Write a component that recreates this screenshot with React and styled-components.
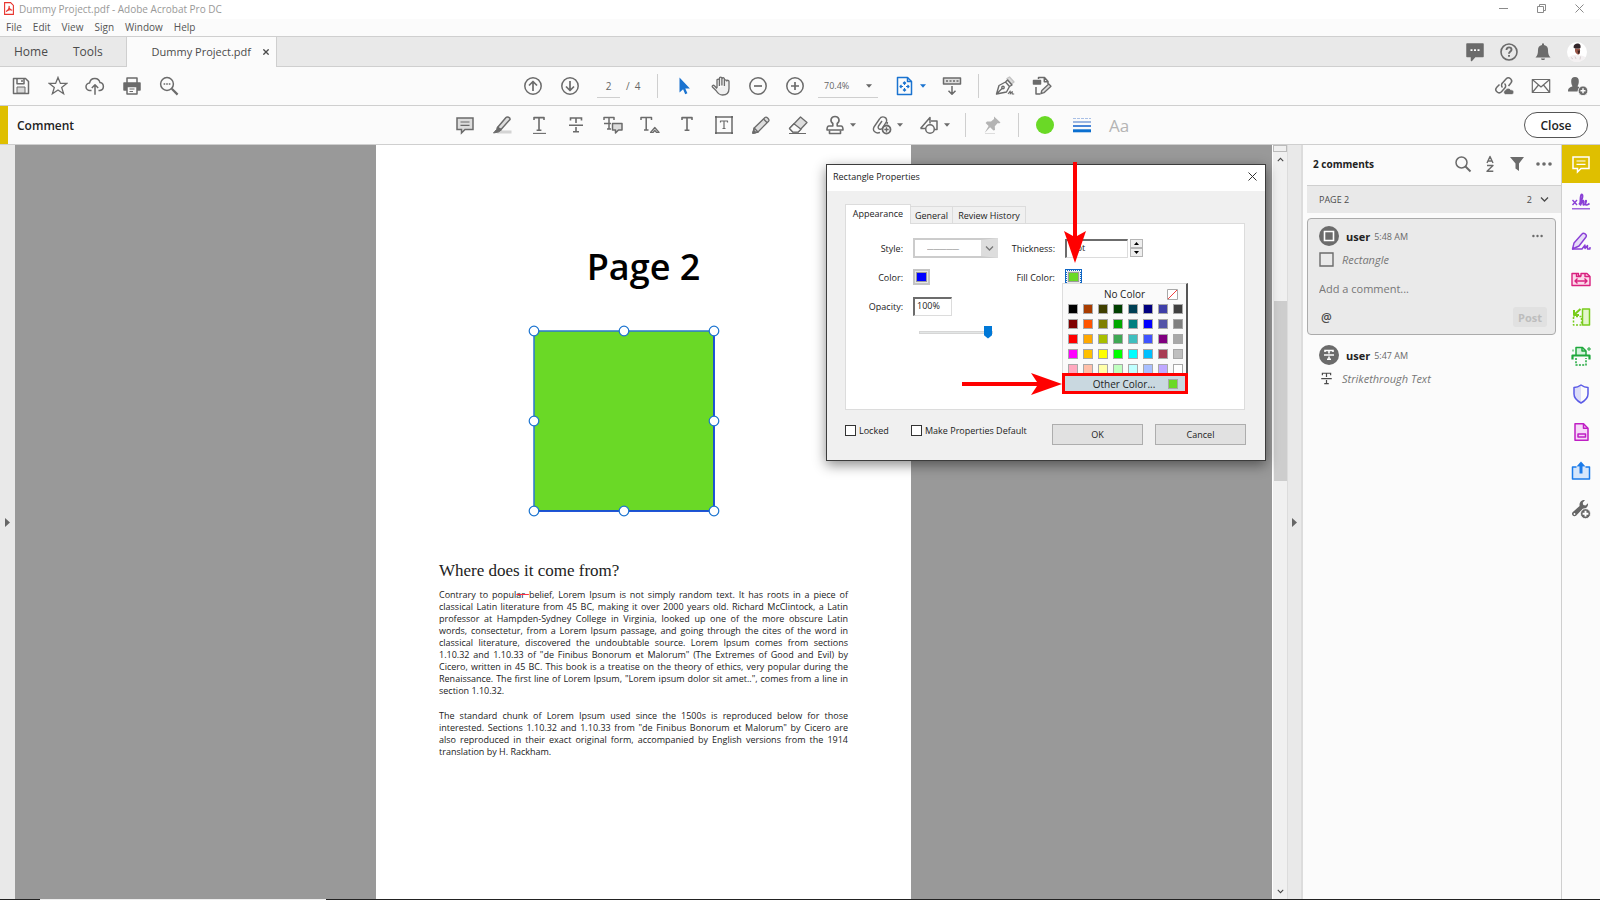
import React from "react";
import styled, { createGlobalStyle, css } from "styled-components";

const c = {
  icon: "#6b6b6b",
  text: "#4b4b4b",
  line: "#cfcfcf",
  bar: "#fbfbfb",
  strip: "#e9e9e9",
  canvas: "#999999",
  yellow: "#dfbf00",
  blue: "#1a73d0",
  green: "#6ad926",
  red: "#ff0000",
};

const GlobalStyle = createGlobalStyle`
  *, *::before, *::after { box-sizing: border-box; }
  body { margin: 0; font-family: "Open Sans", "Noto Sans", sans-serif; font-size: 10px; color: ${c.text}; }
  button, input, select, textarea { font: inherit; color: inherit; margin: 0; padding: 0; border: 0; background: none; border-radius: 0; }
  h1, h2, p { margin: 0; padding: 0; }
  svg { display: block; flex: none; }
`;

/* ---------- shell ---------- */
const Shell = styled.div`
  position: relative;
  min-height: 100vh;
  display: flex;
  flex-direction: column;
  background: ${c.bar};
`;
const TitleBar = styled.header`
  height: 19px;
  display: flex;
  align-items: center;
  gap: 5px;
  padding: 0 11px 2px 4px;
  background: #fff;
  color: #999;
`;
const TitleText = styled.span`
  flex: 1;
`;
const WindowButtons = styled.div`
  display: flex;
  gap: 18px;
`;
const WindowButton = styled.button`
  width: 20px;
  height: 16px;
  display: grid;
  place-items: center;
  color: ${(p) => (p.$dark ? "#333" : "#8a8a8a")};
`;
const MenuBar = styled.nav`
  height: 18px;
  display: flex;
  align-items: center;
  gap: 11px;
  padding: 0 6px 2px;
  border-bottom: 1px solid ${c.line};
`;
const MenuItem = styled.button`
  color: #555;
`;
const TabBar = styled.div`
  height: 30px;
  display: flex;
  align-items: stretch;
  background: ${c.strip};
  border-bottom: 1px solid ${c.line};
`;
const AppTabs = styled.div`
  width: 126px;
  display: flex;
  gap: 25px;
  padding-left: 14px;
`;
const AppTab = styled.button`
  padding: 0 0 1px;
  font-size: 12px;
`;
const FileTab = styled.div`
  width: 151px;
  height: 30px;
  display: flex;
  align-items: center;
  justify-content: flex-end;
  gap: 12px;
  padding: 0 7px 1px 0;
  background: ${c.bar};
  border: solid ${c.line};
  border-width: 0 1px;
  font-size: 11px;
`;
const TabActions = styled.div`
  margin-left: auto;
  display: flex;
  align-items: center;
  gap: 6px;
  padding-right: 9px;
`;

/* ---------- toolbars ---------- */
const Toolbar = styled.div`
  height: 39px;
  display: grid;
  grid-template-columns: 1fr auto 1fr;
  align-items: center;
  padding: 0 8px 0 7px;
  border-bottom: 1px solid ${c.line};
`;
const CommentBar = styled(Toolbar)`
  padding: 0 12px 0 0;
`;
const Group = styled.div`
  display: flex;
  align-items: center;
  gap: 9px;
  margin-right: ${(p) => p.$shift || 0}px;
  ${(p) => p.$end && css`justify-self: end;`}
`;
const ToolButton = styled.button`
  width: ${(p) => (p.$menu ? 38 : 28)}px;
  height: 28px;
  display: flex;
  align-items: center;
  justify-content: center;
  gap: 5px;
  color: ${(p) => p.$color || c.icon};
`;
const Separator = styled.span`
  width: 1px;
  height: 24px;
  margin: 0 3px;
  background: ${c.line};
`;
const PageBox = styled.label`
  width: 52px;
  display: flex;
  align-items: center;
  gap: 6px;
  padding-left: 4px;
  color: #666;
`;
const PageInput = styled.input`
  width: 23px;
  height: 24px;
  text-align: center;
  border-bottom: 1px solid ${c.line};
  outline: 0;
`;
const ZoomBox = styled.div`
  position: relative;
  width: 64px;
  padding-right: 4px;
  color: #666;
  & > svg { position: absolute; right: 10px; top: 10px; pointer-events: none; }
`;
const ZoomSelect = styled.select`
  appearance: none;
  width: 100%;
  height: 24px;
  padding-left: 6px;
  font-size: 9px;
  border-bottom: 1px solid ${c.line};
`;
const CommentTitle = styled.h2`
  height: 38px;
  display: flex;
  align-items: center;
  padding-left: 9px;
  border-left: 8px solid ${c.yellow};
  font-size: 12px;
  font-weight: 600;
  color: #222;
`;
const CloseButton = styled.button`
  justify-self: end;
  width: 64px;
  height: 26px;
  border: 1px solid #555;
  border-radius: 13px;
  background: #fff;
  font-size: 12px;
  font-weight: 600;
  color: #222;
`;
const ColorDot = styled.span`
  width: 18px;
  height: 18px;
  border-radius: 50%;
  background: ${c.green};
`;
const Aa = styled.span`
  font-size: 17px;
  color: #b4b4b4;
`;

/* ---------- workspace ---------- */
const Workspace = styled.div`
  flex: 1;
  display: flex;
  align-items: stretch;
`;
const Strip = styled.button`
  width: ${(p) => p.$w}px;
  display: grid;
  place-items: center;
  background: ${c.strip};
  ${(p) => p.$lined && css`border: solid #dcdcdc; border-width: 0 2px 0 1px;`}
`;
const Viewer = styled.main`
  flex: 1;
  display: flex;
  justify-content: center;
  background: ${c.canvas};
`;
const Page = styled.article`
  width: 535px;
  padding: 97px 63px 0;
  background: #fff;
  color: #222;
`;
const PageTitle = styled.h1`
  font-size: 36px;
  line-height: 50px;
  font-weight: 600;
  text-align: center;
  color: #000;
`;
const Shape = styled.svg`
  margin: 33px 0 0 89px;
  overflow: visible;
`;
const Heading = styled.h2`
  margin: 44px 0 8px;
  font-family: "Liberation Serif", serif;
  font-size: 17px;
  line-height: 20px;
  font-weight: 400;
`;
const Paragraph = styled.p`
  margin-bottom: 13px;
  font-size: 9px;
  line-height: 12px;
`;
const Line = styled.span`
  display: block;
  white-space: nowrap;
  text-align: justify;
  text-align-last: ${(p) => (p.$last ? "left" : "justify")};
`;
const Struck = styled.s`
  text-decoration: line-through 1px #ff2f45;
`;
const ScrollBar = styled.div`
  width: 15px;
  display: flex;
  flex-direction: column;
  align-items: center;
  background: #f0f0f0;
  border-left: 1px solid #fff;
`;
const SplitBox = styled.span`
  width: 14px;
  height: 7px;
  border: 1px solid #bbb;
  background: #f0f0f0;
`;
const ScrollArrow = styled.button`
  width: 14px;
  height: 15px;
  display: grid;
  place-items: center;
  color: #444;
`;
const Track = styled.div`
  flex: 1;
  width: 13px;
  padding-top: 134px;
`;
const Thumb = styled.div`
  height: 180px;
  background: #cdcdcd;
`;

/* ---------- comments ---------- */
const Panel = styled.aside`
  width: 259px;
  padding-left: 4px;
  background: ${c.bar};
  border-right: 1px solid ${c.line};
`;
const PanelHeader = styled.div`
  height: 41px;
  display: flex;
  align-items: center;
  justify-content: space-between;
  padding: 0 7px 2px 6px;
  border-bottom: 1px solid ${c.line};
`;
const PanelTitle = styled.h2`
  font-size: 10px;
  font-weight: 700;
  color: #222;
`;
const PanelTools = styled.div`
  display: flex;
  gap: 7px;
`;
const SmallButton = styled.button`
  width: 20px;
  height: 20px;
  display: grid;
  place-items: center;
  color: ${c.icon};
`;
const PageGroup = styled.button`
  width: 100%;
  height: 27px;
  margin-bottom: 5px;
  display: flex;
  align-items: center;
  gap: 8px;
  padding: 0 12px;
  background: ${c.strip};
  font-size: 9px;
`;
const Count = styled.span`
  margin-left: auto;
`;
const Card = styled.section`
  margin: 0 5px 2px 0;
  padding: 6px 8px 7px 11px;
  border: 1px solid ${(p) => (p.$active ? "#ababab" : "transparent")};
  border-radius: 4px;
  background: ${(p) => (p.$active ? "#eaeaea" : "transparent")};
`;
const CardRow = styled.div`
  display: flex;
  align-items: center;
  height: ${(p) => p.$h}px;
  gap: ${(p) => p.$gap || 7}px;
`;
const Author = styled.strong`
  font-size: 11px;
  font-weight: 700;
  color: #222;
`;
const Time = styled.time`
  flex: 1;
  font-size: 9px;
  color: #6a6a6a;
`;
const Byline = styled.div`
  flex: 1;
  display: flex;
  align-items: center;
  gap: 4px;
`;
const Kind = styled.em`
  font-size: 11px;
  color: #777;
`;
const Reply = styled.input`
  width: 100%;
  height: 24px;
  margin: 4px 0 7px;
  font-size: 11px;
  &::placeholder { color: #777; opacity: 1; }
`;
const CardFooter = styled.div`
  display: flex;
  justify-content: space-between;
  align-items: center;
  height: 20px;
`;
const Mention = styled.button`
  padding-left: 2px;
  font-size: 12px;
  font-weight: 600;
`;
const PostButton = styled.button`
  width: 34px;
  height: 20px;
  border-radius: 3px;
  background: #e1e1e1;
  color: #bdbdbd;
  font-size: 11px;
  font-weight: 700;
`;
const Rail = styled.nav`
  width: 38px;
  height: 383px;
  display: grid;
  grid-auto-rows: 1fr;
`;
const RailButton = styled.button`
  display: grid;
  place-items: center;
  color: ${(p) => p.$color};
  background: ${(p) => (p.$active ? c.yellow : "transparent")};
`;
const Taskbar = styled.footer`
  height: 1px;
  display: flex;
  background: #222;
  &::before { content: ""; width: 286px; margin-left: 40px; background: #eee; }
`;

/* ---------- dialog ---------- */
const Dialog = styled.div`
  position: absolute;
  left: 826px;
  top: 164px;
  width: 440px;
  border: 1px solid #3c3c3c;
  background: #f0f0f0;
  box-shadow: 0 4px 12px rgba(0, 0, 0, 0.45);
  font-size: 9px;
  color: #222;
`;
const DialogTitle = styled.div`
  height: 26px;
  display: flex;
  align-items: center;
  justify-content: space-between;
  padding: 0 3px 3px 6px;
  background: #fff;
`;
const DialogBody = styled.div`
  padding: 13px 18px 15px;
`;
const DialogTabs = styled.div`
  display: flex;
  align-items: flex-end;
`;
const DialogTab = styled.button`
  height: ${(p) => (p.$active ? 20 : 17)}px;
  width: ${(p) => p.$w}px;
  margin-bottom: ${(p) => (p.$active ? -1 : 0)}px;
  padding-bottom: ${(p) => (p.$active ? 2 : 0)}px;
  position: relative;
  background: ${(p) => (p.$active ? "#fff" : "#f0f0f0")};
  border: 1px solid #dcdcdc;
  border-bottom: 0;
  border-left-width: ${(p) => (p.$joined ? 0 : 1)}px;
`;
const Sheet = styled.div`
  height: 187px;
  margin-right: 2px;
  display: flex;
  padding-top: 14px;
  background: #fff;
  border: 1px solid #dcdcdc;
`;
const Fields = styled.div`
  width: ${(p) => p.$w}px;
  display: flex;
  flex-direction: column;
  gap: 9px;
`;
const Field = styled.div`
  display: flex;
  align-items: center;
  height: ${(p) => p.$h || 20}px;
`;
const FieldLabel = styled.label`
  width: 57px;
  margin-right: 10px;
  text-align: right;
  white-space: nowrap;
`;
const StyleBox = styled.div`
  position: relative;
  display: flex;
  & > svg { position: absolute; right: 4px; top: 8px; pointer-events: none; color: #777; }
`;
const StyleSelect = styled.select`
  appearance: none;
  width: 85px;
  height: 20px;
  padding-left: 12px;
  border: 2px solid #cccccc;
  border-right-width: 17px;
  border-right-color: #dddddd;
  background: #fff;
  color: #999;
`;
const SunkenInput = styled.input`
  width: ${(p) => p.$w}px;
  height: 19px;
  padding: 0 2px 2px;
  border: 1px solid #dcdcdc;
  border-top: 2px solid #6c6c6c;
  border-left: 2px solid #6c6c6c;
  background: #fff;
`;
const Spinner = styled.div`
  margin-left: 2px;
  display: grid;
`;
const SpinButton = styled.button`
  width: 13px;
  height: 9px;
  display: grid;
  place-items: center;
  border: 1px solid #b5b5b5;
  background: #eee;
`;
const ColorButton = styled.button`
  width: 17px;
  height: 16px;
  border: 2px solid ${(p) => (p.$focus ? "#0f66c4" : "#c4c4c4")};
  background: #e6e6e6;
  padding: 1px;
  ${(p) => p.$focus && css`outline: 1px dotted #fff; outline-offset: -2px;`}
  &::before { content: ""; display: block; height: 100%; background: ${(p) => p.$color}; border: 1px solid #9a9a9a; }
`;
const Slider = styled.input`
  appearance: none;
  width: 74px;
  height: 14px;
  margin-left: 73px;
  &::-webkit-slider-runnable-track { height: 3px; background: #e3e6e6; border: 1px solid #d6d6d6; }
  &::-webkit-slider-thumb {
    appearance: none;
    width: 8px;
    height: 13px;
    margin-top: -6px;
    background: #0078d7;
    clip-path: polygon(0 0, 100% 0, 100% 75%, 50% 100%, 0 75%);
  }
`;
const PickerAnchor = styled.div`
  position: relative;
  display: flex;
`;
const Picker = styled.div`
  position: absolute;
  left: -3px;
  top: 14px;
  width: 126px;
  background: #fafafa;
  border-left: 1px solid #ddd;
  border-top: 1px solid #ddd;
  border-right: 2px solid #555;
`;
const PickerRow = styled.button`
  width: 100%;
  height: 20px;
  display: grid;
  grid-template-columns: 1fr auto;
  align-items: center;
  padding-right: 8px;
  padding-left: 19px;
  font-size: 10px;
  ${(p) => p.$marked && css`
    width: 126px;
    height: 21px;
    margin: -1px -2px 0 -1px;
    padding-right: 7px;
    padding-left: 15px;
    border: 3px solid ${c.red};
    background: #c9d8e0;
    position: relative;
  `}
`;
const Swatches = styled.div`
  display: grid;
  grid-template-columns: repeat(8, 10px);
  gap: 5px;
  padding-left: 5px;
`;
const Swatch = styled.button`
  display: block;
  width: 10px;
  height: 10px;
  border: 1px solid #a8a8a8;
  background: ${(p) => p.$color};
`;
const SwatchMark = styled.span`
  width: 10px;
  height: 10px;
  border: 1px solid #a8a8a8;
  background: ${(p) => p.$color};
`;
const DialogFooter = styled.div`
  display: flex;
  align-items: flex-start;
  padding-top: 14px;
`;
const Check = styled.label`
  display: flex;
  align-items: center;
  gap: 3px;
  height: 13px;
  width: ${(p) => p.$w}px;
  white-space: nowrap;
`;
const CheckBox = styled.input`
  appearance: none;
  width: 11px;
  height: 11px;
  border: 1px solid #333;
  background: #fff;
`;
const DialogButton = styled.button`
  width: 91px;
  height: 21px;
  margin-left: ${(p) => p.$gap || 0}px;
  border: 1px solid #adadad;
  background: #e1e1e1;
`;
const Pointer = styled.svg`
  position: absolute;
  left: ${(p) => p.$x}px;
  top: ${(p) => p.$y}px;
  pointer-events: none;
`;

/* ---------- icons ---------- */
const Ico = ({ w = 20, h = 20, sw = 1.5, fill = "none", children }) => (
  <svg width={w} height={h} viewBox={`0 0 ${w} ${h}`} fill={fill} stroke="currentColor" strokeWidth={sw} strokeLinejoin="round" aria-hidden="true">
    {children}
  </svg>
);
const Caret = () => (
  <svg width="6" height="4" viewBox="0 0 6 4" fill="currentColor" aria-hidden="true"><path d="M0 0.3h6L3 3.7z" /></svg>
);

const SaveIcon = () => <Ico><path d="M2.5 2.5h12l3 3v12h-15z" /><path d="M6 2.8v5h7v-5M11 4v2" /><path d="M6 17v-6h8v6z" fill="#d9d9d9" strokeWidth="1" /></Ico>;
const StarIcon = () => <Ico sw={1.3}><path d="M10 1.4l2.4 6h6.3l-5 4 1.9 6.4-5.6-3.8-5.6 3.8 1.9-6.4-5-4h6.3z" strokeLinejoin="miter" /></Ico>;
const CloudIcon = () => <Ico><path d="M6.5 14.5H5a3.8 3.8 0 01-.4-7.6A5.3 5.3 0 0115 6.6a4 4 0 010 7.9h-1.5M10 18.7V9M6.8 12L10 8.8l3.2 3.2" /></Ico>;
const PrintIcon = () => <Ico><path d="M5 7V2h10v5" fill="#fbfbfb" /><path d="M2 7h16v7H2z" fill="currentColor" /><path d="M5 10.5h10V18H5z" fill="#fbfbfb" /><path d="M7.5 13h5M7.5 15.5h3.5" strokeWidth="1" /></Ico>;
const FindIcon = () => <Ico><circle cx="8" cy="8" r="6.4" /><path d="M12.8 12.8l5.8 5.8" strokeWidth="2.2" /><path d="M4.6 8h1.6M7.2 8h1.6M9.8 8h1.6" /></Ico>;
const CircleIcon = ({ d }) => <Ico><circle cx="10" cy="10" r="8.2" /><path d={d} strokeWidth="1.7" /></Ico>;
const ArrowIcon = () => <Ico><path d="M5.5 1.5v15l3.6-3.2 2.1 5 2.2-1-2.1-4.8h4.6z" fill="currentColor" stroke="none" /></Ico>;
const HandIcon = () => <Ico sw={1.3}><path d="M6 12V4.3a1.2 1.2 0 012.4 0V10M8.4 9.5V2.4a1.2 1.2 0 012.5 0v7.1M10.9 9.5V3a1.2 1.2 0 012.5 0v7M13.4 10V5a1.2 1.2 0 012.4 0v-.2a1.2 1.2 0 012.2.5v7.2c0 4-2.4 6.500-6.500 6.500-3.500 0-5-2-6.500-4.500L1.400 11c-.8-1.300 1-2.400 2-1.200L6 12.500" fill="#f0f0f0" /></Ico>;
const FitIcon = () => <Ico><path d="M2.500 1.500h10l4 4v13h-14z" /><path d="M12.500 1.500v4h4" /><path d="M9.500 6v3M9.500 12v3M5 10.500h3M11 10.500h3M8 7.500L9.500 6 11 7.500M8 13.500L9.500 15l1.500-1.500M6.500 9L5 10.500 6.500 12M12.500 9l1.500 1.500-1.500 1.500" strokeWidth="1.200" /></Ico>;
const KeysIcon = () => <Ico><path d="M1.500 2h17v6h-17z" fill="#ddd" /><path d="M4 5h2M7.500 5h2M11 5h2M14.500 5h2M10 10v8M6.500 14.700L10 18.200l3.500-3.500" /></Ico>;
const PenIcon = () => <Ico sw={1.400}><path d="M12 2.500l2.500-1.500 4.500 5-2.500 2z" fill="#ddd" stroke="#c4c4c4" /><path d="M1.500 18L4 9.500 10.500 6l4 4.500-3 5.500zM10.500 6l2-2 4.500 5-2.500 1.500M1.500 18l5.500-5.500" /><circle cx="8" cy="11.500" r="1.200" /><path d="M13 18l2.200-3v3l2-2.500V18h2" strokeWidth="1.100" /></Ico>;
const EditDocIcon = () => <Ico><path d="M6.500 3V1.500h6l3.500 4v2.500M4 11v7h4.500M12.300 1.800v4h3.500" /><path d="M1.500 4.500h7v3.500h-7z" fill="currentColor" /><path d="M9 17.500l.8-3 7-6.500 2.200 2.200-7 6.500z" fill="#ddd" strokeWidth="1.300" /></Ico>;
const LinkIcon = () => <Ico><path d="M8.500 11.500a3.200 3.200 0 010-4.600l3.500-4a3.200 3.200 0 014.700 4.400L14.500 10M10.500 7.500a3.200 3.200 0 01.3 4.600L7.500 15.700a3.200 3.200 0 01-4.700-4.500L5.500 8.500" /><path d="M11.500 18.500a2.300 2.300 0 010-4.500 2.800 2.800 0 015.200-.2 2.400 2.400 0 011.300 4.700z" fill="currentColor" stroke="#fbfbfb" strokeWidth=".6" /></Ico>;
const MailIcon = () => <Ico sw={1.400}><path d="M1.300 3.500h17.400v13H1.300zM1.300 3.500L10 11l8.700-7.500M1.300 16.500L7.500 9M18.700 16.500L12.500 9" strokeWidth="1.200" /></Ico>;
const PersonAddIcon = () => <Ico><path d="M0 15.500c0-3.500 2-4 4.500-5.200C3.500 8.500 3.200 7 3.200 5a3.800 4 0 017.600 0c0 2-.3 3.500-1.300 5.300l2 1-2 4.200z" fill="currentColor" stroke="none" /><circle cx="15" cy="14.800" r="4.800" fill="currentColor" stroke="#fbfbfb" strokeWidth=".8" /><path d="M15 12.300v5M12.500 14.800h5" stroke="#fbfbfb" /></Ico>;

const NoteIcon = ({ fill = "#ddd" }) => <Ico><path d="M2 3h16v11.500H10L6.500 18v-3.500H2z" fill={fill} strokeLinejoin="miter" /><path d="M5.500 7h9M5.500 10.300h9" strokeWidth="1.200" /></Ico>;
const HighlightIcon = () => <Ico><path d="M8 15.500h11.500v3H5z" fill="#d4d4d4" stroke="none" /><path d="M5.500 12.500L14 2.500c1-1 4.500-.5 4 2l-9 10z" fill="#ddd" /><path d="M5.500 12l-1 2.500L1.500 18l5-1 2.800-2z" fill="currentColor" strokeWidth="1" /></Ico>;
const TextIcon = ({ underline }) => <Ico sw={1.600}><path d="M5 5V2.600h10V5M10 2.600v12.600M7.600 15.200h4.800" />{underline && <path d="M4 18.400h13" strokeWidth="1.100" />}</Ico>;
const StrikeIcon = ({ w = 20 }) => <svg width={w} height={w} viewBox="0 0 20 20" fill="none" stroke="currentColor" strokeWidth="1.600" aria-hidden="true"><path d="M4.500 5.500V3h11v2.500M10 3v5M10 12v4.500M7 16.800h6M3 10.200h14" /></svg>;
const ReplaceIcon = () => <Ico><path d="M1 5V2.500h10V5M6 2.500V14M4 14h4M1 8.500h7" /><path d="M9.500 8.500h9.500v6.500h-3.500l-3 3v-3h-3z" fill="#ddd" /></Ico>;
const InsertIcon = () => <Ico><path d="M1 5V2.500h10.500V5M6.200 2.500V15M4 15h4.500" /><path d="M10.500 17.500l4.300-5 4.300 5h-2.500l-1.800-2-1.800 2z" fill="#ddd" strokeWidth="1.200" /></Ico>;
const TextBoxIcon = () => <Ico><path d="M2 2h16v16H2z" /><path d="M6.500 7.500V6h7v1.500M10 6v7.500M8.500 13.500h3" strokeWidth="1.200" /><path d="M1 1h2v2H1zM17 1h2v2h-2zM1 17h2v2H1zM17 17h2v2h-2z" fill="currentColor" stroke="none" /></Ico>;
const PencilIcon = () => <Ico sw={1.300}><path d="M2 18l1.200-5L14 2.500c1.500-1.200 5 2 3.600 3.700L7 17z" fill="#ddd" /><path d="M2 18l1.200-5L7 17zM12.500 4l3.700 3.700" /><path d="M2 18l.6-2.500 2 2z" fill="currentColor" /></Ico>;
const EraserIcon = () => <Ico sw={1.300}><path d="M1.500 13.500L12.500 2 19 7.500 10 17H5z" fill="#ddd" /><path d="M6 8.800l7 5.400-3 3H5l-3.500-3.700z" fill="#fbfbfb" /><path d="M1 18.500h17" strokeWidth="1" /></Ico>;
const StampIcon = () => <Ico sw={1.600}><path d="M7.800 11V8.500C4.500 6 6 1.500 10 1.500s5.500 4.500 2.200 7V11H16c1.500 0 2 1 2 4H2c0-3 .5-4 2-4z" /><path d="M4.500 15.500v3h11v-3" /></Ico>;
const ClipIcon = () => <Ico sw={1.400}><path d="M8 17.500c-4 1.500-8-1.500-6-5.500L7.500 4c2-3.500 8-2.500 7 2.500l-4 6.500c-1.500 2.500-5.500 1-4-2L10 6M15 9l.5-2" /><circle cx="14.500" cy="14.500" r="4" fill="#fbfbfb" strokeWidth="1.800" /><path d="M14.500 12.300v4.400M12.300 14.500h4.400" /></Ico>;
const ShapesIcon = () => <Ico><path d="M1.500 13.500L11 2.500v6M1.500 13.500H7M12 6h6v8.500h-2.500" /><circle cx="11" cy="14" r="4.300" fill="#fbfbfb" /></Ico>;
const PinIcon = () => <Ico fill="currentColor"><path d="M12 1.500l6.500 6-1.500 1-1.200-.5-3 3.300.2 3.700-1.500.5-3.400-3.300-5.500 5.700 4-7-3-3L5 6.500h4L12 4z" stroke="none" /><path d="M3 18.500h10" stroke="#ddd" strokeWidth="1" /></Ico>;
const WeightIcon = () => <svg width="18" height="16" viewBox="0 0 18 16" aria-hidden="true"><path d="M0 1.500h18" stroke="#a9c0e6" strokeWidth="1" strokeDasharray="3 1" /><path d="M0 5h18" stroke="#7d9fd8" strokeWidth="1.500" /><path d="M0 9h18" stroke="#4a86d8" strokeWidth="2" /><path d="M0 13.800h18" stroke="#0b6fd0" strokeWidth="3" /></svg>;

const ChatIcon = () => <Ico><path d="M2 2h16v12.500H10L6.500 18.500v-4H2z" fill="currentColor" /><path d="M5.500 8.200h2M9 8.200h2M12.500 8.200h2" stroke="#fff" strokeWidth="1.800" /></Ico>;
const HelpIcon = () => <Ico sw={1.600}><circle cx="10" cy="10" r="8" /><path d="M7.500 8c0-3.600 5-3.200 5-.3 0 1.800-2.500 1.900-2.500 4M10 13v1.800" strokeWidth="1.900" /></Ico>;
const BellIcon = () => <Ico fill="currentColor"><path d="M9 3V1.500h2V3c3 .5 4 2.500 4 5 0 3.500.5 5.500 2.500 7.500h-15C4.500 13.500 5 11.500 5 8c0-2.500 1-4.500 4-5zM8 16.500h4c0 2-4 2-4 0z" stroke="none" /></Ico>;
const AvatarIcon = () => (
  <svg width="20" height="20" viewBox="0 0 20 20" aria-hidden="true">
    <circle cx="10" cy="10" r="10" fill="#fff" />
    <path d="M1.500 15.500c2-2 5-2.500 7.500-2.500l4 .5c2 0 4 .5 5.500 2A10 10 0 0110 20c-4 0-7-2-8.500-4.500z" fill="#f4f1f2" />
    <path d="M8 6.500h5v3.500c0 2-1 2.500-2 2.500S8 10.500 8 9z" fill="#9a5648" />
    <path d="M6.500 5.500C6.500 2.500 8.500 1.500 10.500 1.500s3.500 1 3 4.500l-1.500.5H8z" fill="#33272b" />
    <path d="M10.500 8.500h2.700l-1 3.300h-1z" fill="#3b2422" />
    <path d="M4 15.500l2 1.500M8 14.500l1 2.500M13.500 14.500l-.5 3" stroke="#d9cfd2" />
  </svg>
);
const AcrobatIcon = () => (
  <svg width="10" height="13" viewBox="0 0 10 13" fill="none" stroke="#e8352e" aria-hidden="true">
    <path d="M.6.600h6L9.400 3.400v9H.6z" fill="#fff" strokeWidth="1.100" />
    <path d="M2 9.500c2-1 3.300-3.500 3.200-5.500C4.500 5.500 6 8 8.200 8.300 6.500 7.300 3.800 8 2 9.500z" strokeWidth="1.100" />
  </svg>
);
const SearchIcon = () => <Ico w={18} h={18} sw={1.500}><circle cx="7.500" cy="7.500" r="5.500" /><path d="M11.500 11.500l5 5" strokeWidth="2" /></Ico>;
const SortIcon = () => <Ico w={10} h={18} sw={1.400}><path d="M2 8L5 1.500 8 8M3 6h4M2 10.500h6L2 16.300h6.300" /></Ico>;
const FunnelIcon = () => <Ico w={16} h={16} fill="currentColor"><path d="M1 1h14L10 7.500V15l-3.500-2.500v-5z" stroke="none" /></Ico>;
const DotsIcon = ({ r = 1.800, w = 16 }) => <svg width={w} height="6" viewBox={`0 0 ${w} 6`} fill="currentColor" aria-hidden="true"><circle cx={r + 0.200} cy="3" r={r} /><circle cx={w / 2} cy="3" r={r} /><circle cx={w - r - 0.200} cy="3" r={r} /></svg>;
const Chevron = ({ w = 9, up }) => <svg width={w} height="5" viewBox="0 0 9 5" fill="none" stroke="currentColor" strokeWidth="1.300" aria-hidden="true"><path d={up ? "M1 4.500l3.500-3.500L8 4.500" : "M1 .5L4.500 4 8 .5"} /></svg>;
const SideArrow = () => <svg width="5" height="9" viewBox="0 0 5 9" fill="#666" aria-hidden="true"><path d="M0 0l5 4.500L0 9z" /></svg>;
const CrossIcon = ({ s = 9, sw = 1 }) => <svg width={s} height={s} viewBox="0 0 9 9" stroke="currentColor" strokeWidth={sw} aria-hidden="true"><path d="M.5.500l8 8M8.500.500l-8 8" /></svg>;

const SignRail = () => <Ico sw={1.400}><path d="M1.500 8l4.500 5M6 8l-4.500 5" /><path d="M8 12.500C11 9 12.500 3.500 11 2.500S9 9 9.500 13c1.500-4 3-5.500 3-3.500 0 1-.8 3.500.3 3.500 1.500 0 3-4.500 2.200-4.500s-1 4.500.5 4.500c1 0 1.500-.5 3-1.500" strokeWidth="1.700" /><path d="M1 16.800h18" strokeWidth="1.200" /></Ico>;
const FillRail = () => <Ico sw={1.400}><path d="M1.500 18l1.500-6L11 3c1.500-2 5.500.5 4 3L8 15z" fill="#e6dcf8" /><path d="M1 18h10l3-4v3.500l2.500-3V18h2.500v-2" /></Ico>;
const CombineRail = () => <Ico sw={1.400}><path d="M1 16.500v-12h6.500V7H10V4.500h6l3 3v9z" fill="#fbd9e9" /><path d="M5.500 4.500V7.500H10M14 4.500v3h5M4 12h12M6.500 9.500L4 12l2.500 2.500M13.500 9.500L16 12l-2.500 2.500" /></Ico>;
const OrganizeRail = () => <Ico sw={1.500}><path d="M11.500 2h7v16h-7z" fill="#e3f6cb" /><path d="M2.500 10v8h8V9.500h-8" strokeDasharray="2 1.500" /><path d="M9.500 2L4 7M3 3v5h5" strokeWidth="2" /></Ico>;
const ScanRail = () => <Ico sw={1.500}><path d="M5 9V1.500h6.500L15 5v4" fill="#d7f3de" /><path d="M11 1.500V5h4" /><path d="M1.500 13.500v-4h17v4" strokeWidth="2.200" /><path d="M5 12v7h10v-7" strokeDasharray="2 1.300" /><path d="M18 1v4M16 3h4M2 3.500v2" strokeWidth="1" /></Ico>;
const ShieldRail = () => <Ico sw={1.500}><path d="M10 1v18C5.500 16.500 3 14 3 10V3.500C6 3.500 8 2.500 10 1z" fill="#dcdcf8" stroke="none" /><path d="M10 1c2 1.500 4 2.500 7 2.500V10c0 4-2.500 6.500-7 9-4.500-2.500-7-5-7-9V3.500C6 3.500 8 2.500 10 1z" /></Ico>;
const FormRail = () => <Ico sw={1.500}><path d="M4 1.800h8.500L17 6.300v12H4z" fill="#f6daf8" /><path d="M12.500 1.800v4.500H17M7 12h7.500v3H7z" /></Ico>;
const ExportRail = () => <Ico sw={1.500}><path d="M5.500 6H1.500v12h17V6h-4" fill="#d5e6fb" /><path d="M10 12.500V3" strokeWidth="3" /><path d="M5.500 5.500L10 .5l4.500 5z" fill="currentColor" stroke="none" /></Ico>;
const WrenchRail = () => <Ico><path d="M1.600 13.200l7-6.200C8 3.300 10.500.8 14 1l-2.300 2.700.6 2.200 2.200.6L17 4.300c.4 3.200-2 5.700-5.200 5.500l-6.800 7c-2.500 1.700-5.300-1.500-3.400-3.600z" fill="currentColor" stroke="none" /><circle cx="3.500" cy="15" r=".9" fill="#fff" stroke="none" /><circle cx="14.500" cy="14.700" r="5" fill="currentColor" stroke="#fbfbfb" strokeWidth=".8" /><path d="M14.500 11.800v5.800M11.600 14.700h5.800" stroke="#fff" strokeWidth="1.900" /></Ico>;

/* ---------- data ---------- */
const menus = ["File", "Edit", "View", "Sign", "Window", "Help"];
const commentTools = [
  ["Sticky note", <NoteIcon />],
  ["Highlight", <HighlightIcon />],
  ["Underline", <TextIcon underline />],
  ["Strikethrough", <StrikeIcon />],
  ["Replace text", <ReplaceIcon />],
  ["Insert text", <InsertIcon />],
  ["Add text", <TextIcon />],
  ["Text box", <TextBoxIcon />],
  ["Pencil", <PencilIcon />],
  ["Eraser", <EraserIcon />],
];
const menuTools = [
  ["Stamp", <StampIcon />],
  ["Attach file", <ClipIcon />],
  ["Drawing tools", <ShapesIcon />],
];
const railTools = [
  ["Comment", "#fff", <NoteIcon fill="none" />],
  ["Fill & Sign", "#8a3fd6", <SignRail />],
  ["Request signatures", "#8a3fd6", <FillRail />],
  ["Combine files", "#d9207f", <CombineRail />],
  ["Organize pages", "#79cc1c", <OrganizeRail />],
  ["Scan & OCR", "#1ea83c", <ScanRail />],
  ["Protect", "#5a5ae6", <ShieldRail />],
  ["Prepare form", "#bf1fc4", <FormRail />],
  ["Export", "#1a7bea", <ExportRail />],
  ["More tools", "#666", <WrenchRail />],
];
const palette = [
  "#000000", "#a83c00", "#3f3f00", "#003f00", "#003f54", "#000080", "#3f3fa8", "#3f3f3f",
  "#800000", "#ff5400", "#808000", "#00a800", "#008080", "#0000ff", "#5454a8", "#808080",
  "#ff0000", "#ffa800", "#a8bf00", "#3fa854", "#3fbfbf", "#3f54ff", "#800080", "#a8a8a8",
  "#ff00ff", "#ffbf00", "#ffff00", "#00ff00", "#00ffff", "#00bfff", "#a83c54", "#bfbfbf",
  "#ffa8bf", "#ffbfa8", "#ffffa8", "#bfffbf", "#bfffff", "#a8bfff", "#bfa8ff", "#ffffff",
];
const para1 = [
  <>Contrary to popul<Struck>ar </Struck>belief, Lorem Ipsum is not simply random text. It has roots in a piece of</>,
  "classical Latin literature from 45 BC, making it over 2000 years old. Richard McClintock, a Latin",
  "professor at Hampden-Sydney College in Virginia, looked up one of the more obscure Latin",
  "words, consectetur, from a Lorem Ipsum passage, and going through the cites of the word in",
  "classical literature, discovered the undoubtable source. Lorem Ipsum comes from sections",
  "1.10.32 and 1.10.33 of \"de Finibus Bonorum et Malorum\" (The Extremes of Good and Evil) by",
  "Cicero, written in 45 BC. This book is a treatise on the theory of ethics, very popular during the",
  "Renaissance. The first line of Lorem Ipsum, \"Lorem ipsum dolor sit amet..\", comes from a line in",
  "section 1.10.32.",
];
const para2 = [
  "The standard chunk of Lorem Ipsum used since the 1500s is reproduced below for those",
  "interested. Sections 1.10.32 and 1.10.33 from \"de Finibus Bonorum et Malorum\" by Cicero are",
  "also reproduced in their exact original form, accompanied by English versions from the 1914",
  "translation by H. Rackham.",
];
const handles = [[6, 6], [96, 6], [186, 6], [6, 96], [186, 96], [6, 186], [96, 186], [186, 186]];

const Tool = ({ label, color, menu, children }) => (
  <ToolButton type="button" aria-label={label} $color={color} $menu={menu}>
    {children}
    {menu && <Caret />}
  </ToolButton>
);
const Lines = ({ lines }) => (
  <Paragraph>
    {lines.map((t, i) => <Line key={i} $last={i === lines.length - 1}>{t}</Line>)}
  </Paragraph>
);

function PropertiesDialog() {
  return (
    <Dialog role="dialog" aria-label="Rectangle Properties">
      <DialogTitle>
        <span>Rectangle Properties</span>
        <WindowButton type="button" aria-label="Close dialog" $dark><CrossIcon /></WindowButton>
      </DialogTitle>
      <DialogBody>
        <DialogTabs role="tablist">
          <DialogTab role="tab" aria-selected="true" $active $w={66}>Appearance</DialogTab>
          <DialogTab role="tab" $joined $w={42}>General</DialogTab>
          <DialogTab role="tab" $joined $w={73}>Review History</DialogTab>
        </DialogTabs>
        <Sheet>
          <Fields $w={152}>
            <Field>
              <FieldLabel htmlFor="line-style">Style:</FieldLabel>
              <StyleBox>
                <StyleSelect id="line-style"><option>─────</option></StyleSelect>
                <Chevron />
              </StyleBox>
            </Field>
            <Field>
              <FieldLabel htmlFor="line-color">Color:</FieldLabel>
              <ColorButton id="line-color" type="button" $color="#0000ff" />
            </Field>
            <Field>
              <FieldLabel htmlFor="opacity">Opacity:</FieldLabel>
              <SunkenInput id="opacity" defaultValue="100%" $w={39} />
            </Field>
            <Field $h={14}>
              <Slider type="range" aria-label="Opacity level" defaultValue="100" />
            </Field>
          </Fields>
          <Fields $w={200}>
            <Field>
              <FieldLabel htmlFor="thickness">Thickness:</FieldLabel>
              <SunkenInput id="thickness" defaultValue="1 pt" $w={63} />
              <Spinner>
                <SpinButton type="button" aria-label="Increase"><svg width="5" height="3" viewBox="0 0 5 3"><path d="M0 3L2.500 0 5 3z" /></svg></SpinButton>
                <SpinButton type="button" aria-label="Decrease"><svg width="5" height="3" viewBox="0 0 5 3"><path d="M0 0h5L2.500 3z" /></svg></SpinButton>
              </Spinner>
            </Field>
            <Field>
              <FieldLabel htmlFor="fill-color">Fill Color:</FieldLabel>
              <PickerAnchor>
                <ColorButton id="fill-color" type="button" $focus $color={c.green} />
                <Picker>
                  <PickerRow type="button">
                    No Color
                    <svg width="11" height="11" viewBox="0 0 11 11" fill="#fff" aria-hidden="true"><path d="M.5.500h10v10H.5z" stroke="#a8a8a8" /><path d="M1 10l9-9" stroke="#f04040" /></svg>
                  </PickerRow>
                  <Swatches>
                    {palette.map((p) => <Swatch key={p} type="button" aria-label={p} $color={p} />)}
                  </Swatches>
                  <PickerRow type="button" $marked>
                    Other Color...
                    <SwatchMark $color={c.green} />
                  </PickerRow>
                </Picker>
              </PickerAnchor>
            </Field>
          </Fields>
        </Sheet>
        <DialogFooter>
          <Check $w={66}><CheckBox type="checkbox" />Locked</Check>
          <Check $w={141}><CheckBox type="checkbox" />Make Properties Default</Check>
          <DialogButton type="button">OK</DialogButton>
          <DialogButton type="button" $gap={12}>Cancel</DialogButton>
        </DialogFooter>
      </DialogBody>
    </Dialog>
  );
}

function Comments() {
  return (
    <Panel>
      <PanelHeader>
        <PanelTitle>2 comments</PanelTitle>
        <PanelTools>
          <SmallButton type="button" aria-label="Search"><SearchIcon /></SmallButton>
          <SmallButton type="button" aria-label="Sort"><SortIcon /></SmallButton>
          <SmallButton type="button" aria-label="Filter"><FunnelIcon /></SmallButton>
          <SmallButton type="button" aria-label="More"><DotsIcon /></SmallButton>
        </PanelTools>
      </PanelHeader>
      <PageGroup type="button">
        PAGE 2<Count>2</Count><Chevron />
      </PageGroup>
      <Card $active>
        <CardRow $h={22}>
          <svg width="20" height="20" viewBox="0 0 20 20" aria-hidden="true"><circle cx="10" cy="10" r="10" fill="#6b6b6b" /><path d="M5.500 5.500h9v9h-9z" fill="#6b6b6b" stroke="#fff" strokeWidth="1.600" /></svg>
          <Byline><Author>user</Author><Time>5:48 AM</Time></Byline>
          <SmallButton type="button" aria-label="Comment options"><DotsIcon r={1.200} w={11} /></SmallButton>
        </CardRow>
        <CardRow $h={25} $gap={8}>
          <svg width="15" height="15" viewBox="0 0 15 15" fill="none" stroke="#6b6b6b" strokeWidth="1.400" aria-hidden="true"><path d="M1 1h13v13H1z" /></svg>
          <Kind>Rectangle</Kind>
        </CardRow>
        <Reply placeholder="Add a comment..." aria-label="Add a comment" />
        <CardFooter>
          <Mention type="button">@</Mention>
          <PostButton type="button">Post</PostButton>
        </CardFooter>
      </Card>
      <Card>
        <CardRow $h={22}>
          <svg width="20" height="20" viewBox="0 0 20 20" fill="none" aria-hidden="true"><circle cx="10" cy="10" r="10" fill="#6b6b6b" /><path d="M6 7V5.500h8V7M10 5.500v3M5 10h10M10 11.500V14M8 14.200h4" stroke="#fff" strokeWidth="1.600" /></svg>
          <Byline><Author>user</Author><Time>5:47 AM</Time></Byline>
        </CardRow>
        <CardRow $h={25} $gap={8}>
          <StrikeIcon w={15} />
          <Kind>Strikethrough Text</Kind>
        </CardRow>
      </Card>
    </Panel>
  );
}

export default function App() {
  return (
    <Shell>
      <GlobalStyle />
      <TitleBar>
        <AcrobatIcon />
        <TitleText>Dummy Project.pdf - Adobe Acrobat Pro DC</TitleText>
        <WindowButtons>
          <WindowButton type="button" aria-label="Minimize"><svg width="9" height="9" viewBox="0 0 9 9"><path d="M0 4.500h9" stroke="currentColor" /></svg></WindowButton>
          <WindowButton type="button" aria-label="Restore"><svg width="9" height="9" viewBox="0 0 9 9" fill="none" stroke="currentColor"><path d="M.5 2.500h6v6h-6zM2.500 2.500v-2h6v6h-2" /></svg></WindowButton>
          <WindowButton type="button" aria-label="Close window"><CrossIcon /></WindowButton>
        </WindowButtons>
      </TitleBar>
      <MenuBar>
        {menus.map((m) => <MenuItem key={m} type="button">{m}</MenuItem>)}
      </MenuBar>
      <TabBar>
        <AppTabs>
          <AppTab type="button">Home</AppTab>
          <AppTab type="button">Tools</AppTab>
        </AppTabs>
        <FileTab>
          Dummy Project.pdf
          <button type="button" aria-label="Close tab"><CrossIcon s={6} sw={2} /></button>
        </FileTab>
        <TabActions>
          <Tool label="Messages"><ChatIcon /></Tool>
          <Tool label="Help"><HelpIcon /></Tool>
          <Tool label="Notifications"><BellIcon /></Tool>
          <Tool label="Account"><AvatarIcon /></Tool>
        </TabActions>
      </TabBar>
      <Toolbar>
        <Group>
          <Tool label="Save"><SaveIcon /></Tool>
          <Tool label="Star"><StarIcon /></Tool>
          <Tool label="Upload"><CloudIcon /></Tool>
          <Tool label="Print"><PrintIcon /></Tool>
          <Tool label="Find"><FindIcon /></Tool>
        </Group>
        <Group $shift={24}>
          <Tool label="Previous page"><CircleIcon d="M10 15V5.500M6 9.500l4-4 4 4" /></Tool>
          <Tool label="Next page"><CircleIcon d="M10 5v9.500M6 10.500l4 4 4-4" /></Tool>
          <PageBox><PageInput aria-label="Page number" defaultValue="2" />/&nbsp; 4</PageBox>
          <Separator />
          <Tool label="Select" color={c.blue}><ArrowIcon /></Tool>
          <Tool label="Pan"><HandIcon /></Tool>
          <Tool label="Zoom out"><CircleIcon d="M6 10h8" /></Tool>
          <Tool label="Zoom in"><CircleIcon d="M6 10h8M10 6v8" /></Tool>
          <ZoomBox><ZoomSelect aria-label="Zoom level"><option>70.4%</option></ZoomSelect><Caret /></ZoomBox>
          <Tool label="Fit page" color={c.blue} menu><FitIcon /></Tool>
          <Tool label="Read mode"><KeysIcon /></Tool>
          <Separator />
          <Tool label="Sign"><PenIcon /></Tool>
          <Tool label="Edit document"><EditDocIcon /></Tool>
        </Group>
        <Group $end>
          <Tool label="Share link"><LinkIcon /></Tool>
          <Tool label="Send by email"><MailIcon /></Tool>
          <Tool label="Invite people"><PersonAddIcon /></Tool>
        </Group>
      </Toolbar>
      <CommentBar>
        <CommentTitle>Comment</CommentTitle>
        <Group $shift={4}>
          {commentTools.map(([label, icon]) => <Tool key={label} label={label}>{icon}</Tool>)}
          {menuTools.map(([label, icon]) => <Tool key={label} label={label} menu>{icon}</Tool>)}
          <Separator />
          <Tool label="Keep tool selected" color="#b4b4b4"><PinIcon /></Tool>
          <Separator />
          <Tool label="Color"><ColorDot /></Tool>
          <Tool label="Line thickness"><WeightIcon /></Tool>
          <Tool label="Text properties"><Aa>Aa</Aa></Tool>
        </Group>
        <CloseButton type="button">Close</CloseButton>
      </CommentBar>
      <Workspace>
        <Strip type="button" aria-label="Show navigation pane" $w={15}><SideArrow /></Strip>
        <Viewer>
          <Page>
            <PageTitle>Page 2</PageTitle>
            <Shape width="192" height="192" viewBox="0 0 192 192" role="img" aria-label="Green rectangle">
              <path d="M6 6h180v180H6z" fill={c.green} stroke="#2a78d0" strokeWidth="1.500" />
              <path d="M6 186h180V6" fill="none" stroke="#0f3fd8" strokeWidth="1.500" />
              {handles.map(([x, y]) => <circle key={`${x}-${y}`} cx={x} cy={y} r="4.800" fill="#fff" stroke="#1a73d0" strokeWidth="1.200" />)}
            </Shape>
            <Heading>Where does it come from?</Heading>
            <Lines lines={para1} />
            <Lines lines={para2} />
          </Page>
        </Viewer>
        <ScrollBar>
          <SplitBox />
          <ScrollArrow type="button" aria-label="Scroll up"><Chevron w={7} up /></ScrollArrow>
          <Track><Thumb /></Track>
          <ScrollArrow type="button" aria-label="Scroll down"><Chevron w={7} /></ScrollArrow>
        </ScrollBar>
        <Strip type="button" aria-label="Hide comments pane" $w={16} $lined><SideArrow /></Strip>
        <Comments />
        <Rail>
          {railTools.map(([label, color, icon], i) => (
            <RailButton key={label} type="button" aria-label={label} $color={color} $active={i === 0}>{icon}</RailButton>
          ))}
        </Rail>
      </Workspace>
      <Taskbar />
      <PropertiesDialog />
      <Pointer $x={1064} $y={162} width="22" height="101" viewBox="0 0 22 101" aria-hidden="true">
        <path d="M9 0h4v74l9-5-11 32L0 69l9 5z" fill={c.red} />
      </Pointer>
      <Pointer $x={962} $y={373} width="100" height="22" viewBox="0 0 100 22" aria-hidden="true">
        <path d="M0 9v4h75l-6 9 31-11L69 0l6 9z" fill={c.red} />
      </Pointer>
    </Shell>
  );
}
